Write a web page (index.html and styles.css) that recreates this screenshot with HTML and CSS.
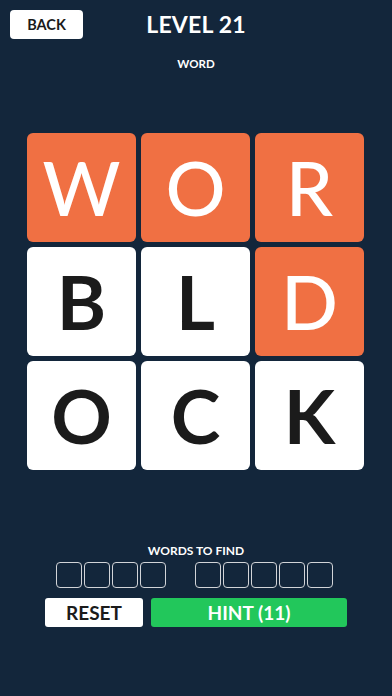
FILE: index.html
```html
<!DOCTYPE html>
<html>
<head>
<meta charset="utf-8">
<link rel="stylesheet" href="styles.css">
</head>
<body>
<div class="app">
  <header class="top">
    <div class="left"><button class="back">BACK</button></div>
    <h1 class="title">LEVEL 21</h1>
    <div class="right"></div>
  </header>
  <div class="category">WORD</div>
  <div class="board">
    <div class="tile hot">W</div>
    <div class="tile hot">O</div>
    <div class="tile hot">R</div>
    <div class="tile">B</div>
    <div class="tile">L</div>
    <div class="tile hot">D</div>
    <div class="tile">O</div>
    <div class="tile">C</div>
    <div class="tile">K</div>
  </div>
  <div class="bottom">
    <div class="find-label">WORDS TO FIND</div>
    <div class="slots">
      <div class="word"><span></span><span></span><span></span><span></span></div>
      <div class="word"><span></span><span></span><span></span><span></span><span></span></div>
    </div>
    <div class="actions">
      <button class="reset">RESET</button>
      <button class="hint">HINT (11)</button>
    </div>
  </div>
</div>
</body>
</html>
```
FILE: styles.css
```css
* { box-sizing: border-box; }
html, body { margin: 0; padding: 0; }
body {
  background: #13263b;
  font-family: Lato, "Liberation Sans", sans-serif;
  color: #fff;
  width: 392px;
  height: 696px;
  overflow: hidden;
}
.app {
  display: flex;
  flex-direction: column;
  align-items: center;
  height: 696px;
}
.top {
  width: 100%;
  display: grid;
  grid-template-columns: 1fr auto 1fr;
  align-items: center;
  padding: 10px 10px 0;
}
.back {
  width: 73px;
  height: 29px;
  border: none;
  border-radius: 4px;
  background: #fff;
  color: #1a1a1a;
  font-family: inherit;
  font-weight: 700;
  font-size: 14.5px;
  padding: 0;
  display: block;
}
.title {
  margin: 0;
  font-size: 23px;
  font-weight: 700;
  line-height: 29px;
  letter-spacing: 0.2px;
}
.category {
  margin-top: 18px;
  font-size: 11.5px;
  font-weight: 700;
  line-height: 14px;
}
.board {
  margin-top: 62px;
  display: grid;
  grid-template-columns: repeat(3, 109px);
  grid-auto-rows: 109px;
  gap: 5px;
  margin-right: 1px;
}
.tile {
  background: #fff;
  color: #1b1b1b;
  border-radius: 6px;
  display: flex;
  align-items: center;
  justify-content: center;
  font-size: 75px;
  font-weight: 700;
  line-height: 1;
}
.tile.hot {
  background: #f07043;
  color: #fff;
  font-weight: 500;
}
.bottom {
  margin-top: auto;
  margin-bottom: 69px;
  display: flex;
  flex-direction: column;
  align-items: center;
}
.find-label {
  font-size: 12px;
  font-weight: 700;
  line-height: 14px;
}
.slots {
  margin-top: 4px;
  display: flex;
  gap: 29px;
  margin-right: 3px;
}
.word {
  display: flex;
  gap: 2px;
}
.word span {
  width: 26px;
  height: 26px;
  border: 1.5px solid #d2d4d8;
  border-radius: 4px;
}
.actions {
  margin-top: 10px;
  display: flex;
  gap: 8px;
}
.actions button {
  height: 29px;
  border: none;
  border-radius: 3px;
  font-family: inherit;
  font-weight: 700;
  font-size: 19px;
  padding: 0;
}
.reset {
  width: 98px;
  background: #fff;
  color: #1b1b1b;
}
.hint {
  width: 196px;
  background: #22c75b;
  color: #fff;
}
```
